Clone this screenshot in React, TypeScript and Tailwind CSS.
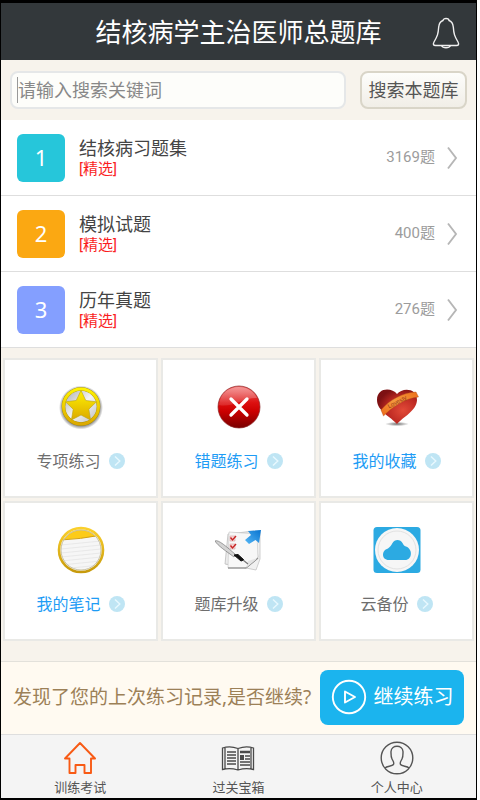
import type { ReactNode } from "react";

const banks = [
  { id: 1, name: "结核病习题集", count: 3169, color: "bg-[#26c6da]" },
  { id: 2, name: "模拟试题", count: 400, color: "bg-[#fba812]" },
  { id: 3, name: "历年真题", count: 276, color: "bg-[#849fff]" },
];

function BellIcon() {
  return (
    <svg width="28" height="32" viewBox="0 0 28 32" fill="none" stroke="#f0f0f0" strokeWidth="1.4" strokeLinejoin="round">
      <path d="M11 3.500C11 .8 17 .8 17 3.500C20 4.500 21 7 21.300 10C21.800 17 22.500 19 26 25C27.300 27.500 26.500 28.500 24.500 28.500H3.500C1.500 28.500 .7 27.500 2 25C5.500 19 6.200 17 6.700 10C7 7 8 4.500 11 3.500Z" />
      <path d="M9.500 28.500C11 31.500 17 31.500 18.500 28.500" />
    </svg>
  );
}

function ChevronIcon() {
  return (
    <svg width="12" height="24" viewBox="0 0 12 24" fill="none" stroke="#b6b6b6" strokeWidth="1.900">
      <path d="M2 1.500L10 12L2 22.500" />
    </svg>
  );
}

function DotArrow() {
  return (
    <svg width="16" height="16" viewBox="0 0 16 16" fill="none">
      <circle cx="8" cy="8" r="8" fill="#bfe5f4" />
      <path d="M6 3.500L10.800 8L6 12.500" stroke="#e8f8fe" strokeWidth="1.400" />
    </svg>
  );
}

function StarIcon() {
  return (
    <svg width="48" height="48" viewBox="0 0 48 48">
      <defs>
        <linearGradient id="gold" x1="0" y1="0" x2="0" y2="1">
          <stop offset="0" stopColor="#fff200" />
          <stop offset="1" stopColor="#dca900" />
        </linearGradient>
        <radialGradient id="starShade">
          <stop offset=".8" stopColor="#444" stopOpacity=".75" />
          <stop offset="1" stopColor="#444" stopOpacity="0" />
        </radialGradient>
        <linearGradient id="silver" x1="0" y1="0" x2="1" y2="1">
          <stop offset="0" stopColor="#aaa" />
          <stop offset=".5" stopColor="#f4f4f4" />
          <stop offset="1" stopColor="#bbb" />
        </linearGradient>
      </defs>
      <circle cx="24" cy="24.500" r="22" fill="url(#starShade)" />
      <circle cx="24" cy="23.500" r="17" fill="url(#silver)" />
      <circle cx="24" cy="23.500" r="17.500" fill="none" stroke="#a08a10" strokeWidth="3.600" />
      <circle cx="24" cy="23.500" r="17.500" fill="none" stroke="url(#gold)" strokeWidth="3" />
      <path d="M24 7.500L28.800 17.500L39.500 18.800L31.800 26.200L33.600 37L24 32L14.400 37L16.200 26.200L8.500 18.800L19.200 17.500Z" fill="url(#gold)" stroke="#b8a214" strokeWidth=".6" />
    </svg>
  );
}

function WrongIcon() {
  return (
    <svg width="48" height="48" viewBox="0 0 48 48">
      <defs>
        <linearGradient id="redBall" x1="0" y1="0" x2="0" y2="1">
          <stop offset="0" stopColor="#f06464" />
          <stop offset=".4" stopColor="#dc1010" />
          <stop offset=".6" stopColor="#cc0000" />
          <stop offset="1" stopColor="#780000" />
        </linearGradient>
        <linearGradient id="gloss" x1="0" y1="0" x2="0" y2="1">
          <stop offset="0" stopColor="#fff" stopOpacity=".35" />
          <stop offset="1" stopColor="#fff" stopOpacity=".12" />
        </linearGradient>
      </defs>
      <circle cx="24" cy="24" r="21" fill="url(#redBall)" stroke="#8d2727" strokeWidth=".7" />
      <path d="M4 22C5 10 14 4 24 4C33 4 39 9 42 15C30 14 17 25 4 22Z" fill="url(#gloss)" />
      <path d="M16 16L32 32M32 16L16 32" stroke="#fff" strokeWidth="3.300" strokeLinecap="round" />
    </svg>
  );
}

function HeartIcon() {
  return (
    <svg width="48" height="48" viewBox="0 0 48 48">
      <defs>
        <radialGradient id="heart" cx=".65" cy=".6" r=".65">
          <stop offset="0" stopColor="#e24a38" />
          <stop offset=".6" stopColor="#bd2922" />
          <stop offset="1" stopColor="#7d1113" />
        </radialGradient>
        <linearGradient id="ribbon" x1="0" y1="1" x2="1" y2="0">
          <stop offset="0" stopColor="#ed6a18" />
          <stop offset=".5" stopColor="#f39a3f" />
          <stop offset="1" stopColor="#ee6f18" />
        </linearGradient>
        <radialGradient id="heartShade">
          <stop offset="0" stopColor="#333" stopOpacity=".7" />
          <stop offset="1" stopColor="#333" stopOpacity="0" />
        </radialGradient>
      </defs>
      <ellipse cx="24" cy="41" rx="12" ry="2.200" fill="url(#heartShade)" />
      <path d="M24 41C18 34 4 28 4 17C4 4 19 4.500 24 11C29 4.500 44 4.500 44 17C43.500 28 30 34 24 41Z" fill="url(#heart)" />
      <path d="M8 27C16 17 30 9.500 43 9L45.500 14C32 15 18 25 10.500 33Z" fill="url(#ribbon)" stroke="#ad4916" strokeWidth=".4" />
      <text x="16" y="25.500" transform="rotate(-28 16 25.500)" fill="#963515" fontSize="6" fontFamily="Liberation Sans, sans-serif">Lovesty</text>
    </svg>
  );
}

function NoteIcon() {
  return (
    <svg width="48" height="48" viewBox="0 0 48 48">
      <defs>
        <linearGradient id="noteRing" x1="0" y1="0" x2="0" y2="1">
          <stop offset="0" stopColor="#fbd02c" />
          <stop offset="1" stopColor="#c79a0c" />
        </linearGradient>
        <clipPath id="noteClip"><circle cx="24" cy="24" r="20.500" /></clipPath>
      </defs>
      <circle cx="24" cy="24" r="22" fill="#f6f6f6" />
      <g clipPath="url(#noteClip)">
        <path d="M0 0H48V9Q25 13 0 14Z" fill="#fccb18" />
        <path d="M4 14Q24 13 42 9.500" stroke="#d2a112" fill="none" />
        <path d="M4 19L44 15M4 23L44 19M4 27L44 23M4 31L44 27M4 35L44 31M4 39L44 35M4 43L44 39" stroke="#e4e4e4" strokeWidth=".8" />
      </g>
      <circle cx="24" cy="24" r="20" fill="none" stroke="#c9c2a6" strokeWidth="1" />
      <circle cx="24" cy="24" r="22" fill="none" stroke="url(#noteRing)" strokeWidth="2.600" />
    </svg>
  );
}

function UpgradeIcon() {
  return (
    <svg width="48" height="48" viewBox="0 0 48 48">
      <defs>
        <linearGradient id="blueArrow" x1="0" y1="1" x2="1" y2="0">
          <stop offset="0" stopColor="#55b7f6" />
          <stop offset="1" stopColor="#0873cf" />
        </linearGradient>
      </defs>
      <path d="M15 7L45 6L45 33L41 44L11 38Z" fill="#f1f1f1" stroke="#c4c4c4" strokeWidth=".8" />
      <path d="M13 8L39 5L43 31L31 41L10 38Z" fill="#ececec" stroke="#bcbcbc" strokeWidth=".8" />
      <path d="M14 6L42 8L43 32L31 42H13Z" fill="#f7f7f7" stroke="#cdcdcd" strokeWidth=".7" />
      <path d="M13 42H31L43 32" stroke="#777" fill="none" strokeWidth="1.200" />
      <path d="M31 42L33 35L43 32Z" fill="#e4e4e4" />
      <path d="M15 10H20V15H15ZM15 18H20V23H15Z" fill="#f7dada" stroke="#d5a2a2" strokeWidth=".6" />
      <path d="M15.500 11.500L17.500 14L21 10M15.500 19.500L17.500 22L21 18" stroke="#c82424" strokeWidth="1.400" fill="none" />
      <path d="M0 15C3 13 12 21 21 29L19 31C11 25 3 20 0 15Z" fill="#d4d4d4" stroke="#777" strokeWidth=".7" />
      <path d="M19 29L23 28.500L29 34L26 35Z" fill="#111" stroke="#111" />
      <path d="M28 34L33 38" stroke="#777" strokeWidth="1.200" />
      <path d="M30 14L36 9L33 5L46 4L44 17L40.500 14L34 18Z" fill="url(#blueArrow)" />
    </svg>
  );
}

function CloudIcon() {
  return (
    <svg width="48" height="48" viewBox="0 0 48 48">
      <rect x=".5" y="1" width="47" height="46" rx="3.500" fill="#2caae2" />
      <circle cx="24" cy="24" r="22" fill="#f6f6f6" />
      <circle cx="24" cy="24" r="19" fill="none" stroke="#e2e2e2" />
      <path d="M16 34C8 34 8.500 24 15 22.500C17 21 18.500 19 19.500 17C21.500 13 27.500 13 29.500 17C30.500 19 31 20 33 20.500C40 23 39.500 34 32 34Z" fill="#2caae2" />
    </svg>
  );
}

function HomeIcon() {
  return (
    <svg width="34" height="34" viewBox="0 0 34 34" fill="none" stroke="#f85a14" strokeWidth="1.900" strokeLinejoin="round">
      <path d="M17 2L32 17.500H28V32H21.500V24H12.500V32H6.500V17.500H2Z" />
    </svg>
  );
}

function BookIcon() {
  return (
    <svg width="34" height="34" viewBox="0 0 34 34" fill="none" stroke="#4a4a4a" strokeWidth="1.300">
      <path d="M1.500 7Q9 4.500 17 7.500Q25 4.500 32.500 7V28.500Q25 26.500 17 29Q9 26.500 1.500 28.500ZM4 6.500V27.500M30 6.500V27.500M17 7.500V29" />
      <path d="M6 11H15M6 14H15M6 17H15M6 20H15M6 23H15M24 15H29M24 18H29M19 21H29M19 24H29" strokeWidth="1.500" />
      <path d="M19 11H29" strokeWidth="2.500" />
      <path d="M19 14H23V19H19Z" fill="#4a4a4a" stroke="none" />
    </svg>
  );
}

function UserIcon() {
  return (
    <svg width="34" height="34" viewBox="0 0 34 34" fill="none" stroke="#555" strokeWidth="1.400">
      <circle cx="17" cy="17" r="15.800" />
      <path d="M5 27C7 25 12 25.500 13.500 23.500C14.500 21.500 13 20 12 18C10.800 16 11 13 11 10.500C11.500 3.500 22.500 3.500 23 10.500C23 13 23.200 16 22 18C21 20 19.500 21.500 20.500 23.500C22 25.500 27 25 29 27" />
    </svg>
  );
}

function PlayIcon() {
  return (
    <svg width="36" height="36" viewBox="0 0 36 36" fill="none" stroke="#fff" strokeWidth="1.900">
      <circle cx="18" cy="18" r="16.200" />
      <path d="M14 12.500L24 18L14 23.500Z" strokeLinejoin="round" />
    </svg>
  );
}

function Tile({ icon, label, blue }: { icon: ReactNode; label: string; blue?: boolean }) {
  return (
    <button className="flex h-[140px] flex-col items-center border-2 border-[#e9e9e6] bg-white pt-[23px]">
      {icon}
      <span className="mt-[18px] flex items-center gap-2">
        <span className={blue ? "text-base text-[#1e9cf5]" : "text-base text-[#6e6e6e]"}>{label}</span>
        <DotArrow />
      </span>
    </button>
  );
}

function Tab({ icon, label }: { icon: ReactNode; label: string }) {
  return (
    <a href="#" className="flex flex-1 flex-col items-center pt-[6px] text-[13px] leading-5 text-[#555]">
      {icon}
      <span className="mt-[2px]">{label}</span>
    </a>
  );
}

export default function App() {
  return (
    <div className="bg-white pr-[3px] font-['Noto_Sans','Noto_Sans_CJK_SC',sans-serif]">
      <div className="flex min-h-screen flex-col border-t-3 border-r border-b-2 border-l border-black bg-[#f7f3ec]">
        <header className="flex h-[57px] items-center bg-[#33383b] pt-[2px] text-white">
          <div className="flex-1 pl-4" />
          <h1 className="text-[26px]">结核病学主治医师总题库</h1>
          <div className="flex flex-1 justify-end pr-4">
            <button aria-label="通知"><BellIcon /></button>
          </div>
        </header>

        <form className="flex h-[60px] items-center gap-[14px] px-[9px]">
          <label className="flex h-[38px] min-w-0 flex-1 items-center rounded-lg border-2 border-[#e5e7e8] bg-[#fdfdfa] pl-[5px]">
            <span className="h-[26px] w-px bg-[#999]" />
            <input
              type="text"
              aria-label="搜索"
              placeholder="请输入搜索关键词"
              className="w-full min-w-0 text-lg outline-none placeholder:text-[#888]"
            />
          </label>
          <button type="button" className="h-[38px] w-[107px] rounded-lg border-2 border-[#d9d5c8] bg-linear-to-b from-[#fdfdfb] to-[#f1eee7] text-lg leading-6 whitespace-nowrap text-[#555]">
            搜索本题库
          </button>
        </form>

        <ul className="bg-white">
          {banks.map((bank) => (
            <li key={bank.id} className="border-b border-[#dedede]">
              <a href="#" className="flex h-[75px] items-center pr-[18px] pl-4 font-['Roboto','Noto_Sans_CJK_SC',sans-serif]">
                <span className={`flex size-12 items-center justify-center rounded-md font-['Noto_Sans',sans-serif] text-[22px] text-white ${bank.color}`}>
                  {bank.id}
                </span>
                <span className="ml-[14px] flex flex-1 flex-col">
                  <span className="text-lg leading-[22px] text-[#444]">{bank.name}</span>
                  <span className="text-[15px] leading-[18px] text-[#fa1e1e]">[精选]</span>
                </span>
                <span className="mr-[11px] text-[15px] text-[#9c9c9c]">{bank.count}题</span>
                <ChevronIcon />
              </a>
            </li>
          ))}
        </ul>

        <div className="grid grid-cols-3 gap-[3px] px-[2px] pt-[10px]">
          <Tile icon={<StarIcon />} label="专项练习" />
          <Tile icon={<WrongIcon />} label="错题练习" blue />
          <Tile icon={<HeartIcon />} label="我的收藏" blue />
          <Tile icon={<NoteIcon />} label="我的笔记" blue />
          <Tile icon={<UpgradeIcon />} label="题库升级" />
          <Tile icon={<CloudIcon />} label="云备份" />
        </div>

        <div className="mt-auto flex h-[73px] items-center justify-between border-t border-[#e3e1db] bg-[#fffaf1] px-3 pb-[2px]">
          <p className="text-[19px] whitespace-nowrap text-[#9c8057]">发现了您的上次练习记录,是否继续?</p>
          <button className="flex h-[55px] w-36 shrink-0 items-center justify-center gap-[7px] rounded-lg bg-[#1bb4ee] text-xl text-white">
            <PlayIcon />
            继续练习
          </button>
        </div>

        <nav className="flex h-[64px] border-t border-[#dedede] bg-[#f4f4f4]">
          <Tab icon={<HomeIcon />} label="训练考试" />
          <Tab icon={<BookIcon />} label="过关宝箱" />
          <Tab icon={<UserIcon />} label="个人中心" />
        </nav>
      </div>
    </div>
  );
}
